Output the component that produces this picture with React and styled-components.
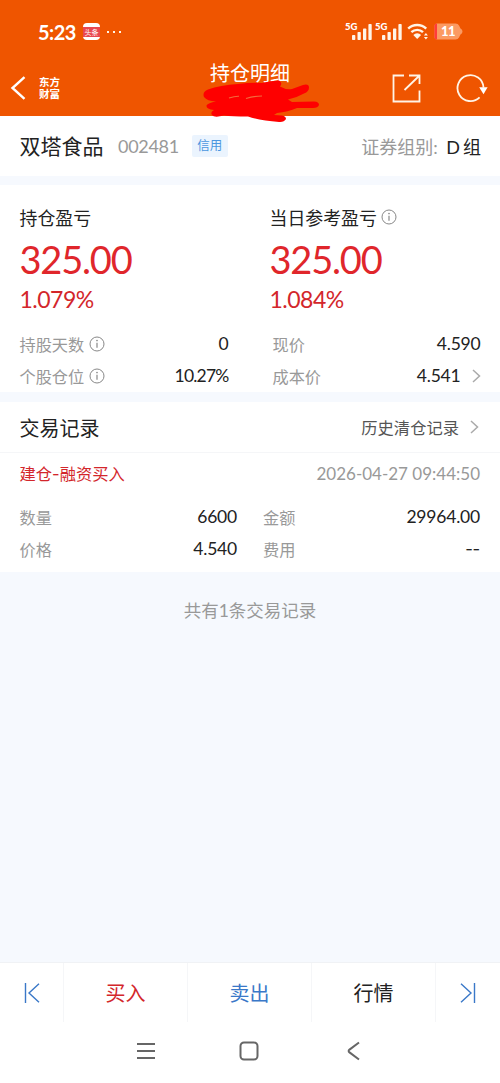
import React from "react";
import styled, { createGlobalStyle } from "styled-components";

const App = () => {
  return (
    <Page>
      <GlobalStyle />
      <Header>
        <StatusBar />
        <TitleBar>
          <BackIcon />
          <Brand>
            东方
            <br />
            财富
          </Brand>
          <Title>
            持仓明细
            <Scribble />
          </Title>
          <ShareIcon />
          <RefreshIcon />
        </TitleBar>
      </Header>

      <StockRow>
        <StockName>双塔食品</StockName>
        <StockCode>002481</StockCode>
        <Tag>信用</Tag>
        <Group>
          证券组别: <b>D</b>
          <i>组</i>
        </Group>
      </StockRow>

      <ProfitCard>
        <ProfitRow>
          <Profit title="持仓盈亏" amount="325.00" percent="1.079%" />
          <Profit title="当日参考盈亏" amount="325.00" percent="1.084%" info />
        </ProfitRow>
        <Details $columns="209px 208px" $gap="44px">
          <Detail label="持股天数" value="0" info />
          <Detail label="现价" value="4.590" />
          <Detail label="个股仓位" value="10.27%" info tight />
          <Detail label="成本价" value="4.541" arrow />
        </Details>
      </ProfitCard>

      <RecordsHeader>
        <h2>交易记录</h2>
        <HistoryLink>
          历史清仓记录
          <Chevron />
        </HistoryLink>
      </RecordsHeader>

      <Record>
        <RecordTop>
          <RecordType>
            建仓<Dash>-</Dash>融资买入
          </RecordType>
          <RecordTime>2026-04-27 09:44:50</RecordTime>
        </RecordTop>
        <Details $columns="217.5px 217px" $gap="26px">
          <Detail label="数量" value="6600" />
          <Detail label="金额" value="29964.00" />
          <Detail label="价格" value="4.540" />
          <Detail label="费用" value={<Dash>--</Dash>} />
        </Details>
      </Record>

      <Summary>共有1条交易记录</Summary>

      <ActionBar>
        <Action $color="#3a78c8">
          <SkipIcon />
        </Action>
        <Action $color="#d3262b">买入</Action>
        <Action $color="#3a78c8">卖出</Action>
        <Action $color="#222">行情</Action>
        <Action $color="#3a78c8">
          <SkipIcon flip />
        </Action>
      </ActionBar>
      <SystemNav />
    </Page>
  );
};

const StatusBar = () => (
  <Status>
    <Clock>5:23</Clock>
    <NewsBadge>
      <span>头条</span>
    </NewsBadge>
    <Dots>
      <span />
      <span />
      <span />
    </Dots>
    <StatusRight>
      <Signal />
      <Signal />
      <WifiSvg width="22" height="17" viewBox="0 0 22 17" fill="none">
        <path
          d="M1.2 5.6a13 13 0 0 1 18 0M4.4 9.2a8.4 8.4 0 0 1 11.6 0"
          stroke="#fff4e6"
          strokeWidth="2.4"
        />
        <path d="M6.3 11.9a5.6 5.6 0 0 1 7.8 0L10.2 16z" fill="#fff4e6" />
        <path
          d="M16.9 12.6l2-2.6 2 2.6zM16.9 14l2 2.6 2-2.6z"
          fill="#fff4e6"
        />
      </WifiSvg>
      <Battery>
        <svg width="29" height="17" viewBox="0 0 29 17">
          <path
            d="M3 .5h18.5q2.5 0 3.5 2l1.5 3q2 1 2 3t-2 3l-1.5 3q-1 2-3.5 2H3q-2.5 0-2.5-2.5V3Q.5.5 3 .5z"
            fill="#fb9a62"
          />
          <path d="M3 .5v16q-2.5 0-2.5-2.5V3Q.5.5 3 .5z" fill="#ff3b3b" />
        </svg>
        <span>11</span>
      </Battery>
    </StatusRight>
  </Status>
);

const Signal = () => (
  <SignalWrap>
    <span>5G</span>
    <svg width="20" height="16" viewBox="0 0 20 16" fill="#fff4e6">
      <rect x="0" y="11" width="3.3" height="5" rx="0.8" />
      <rect x="5.5" y="8" width="3.3" height="8" rx="0.8" />
      <rect x="11" y="4.5" width="3.3" height="11.5" rx="0.8" />
      <rect x="16.4" y="0" width="3.3" height="16" rx="0.8" />
    </svg>
  </SignalWrap>
);

const BackIcon = () => (
  <svg width="16" height="24" viewBox="0 0 16 24" fill="none">
    <path d="M14.5 1.2L2.5 12l12 10.8" stroke="#fff" strokeWidth="2.4" />
  </svg>
);

const ShareIcon = () => (
  <ShareSvg width="29" height="29" viewBox="0 0 29 29" fill="none">
    <path d="M12 1.5H1.5v26h26V16.5M17 1.5h10.5V10M27 2L12.5 16" />
  </ShareSvg>
);

const RefreshIcon = () => (
  <svg width="32" height="30" viewBox="0 0 32 30" fill="none">
    <path
      d="M23.6 24.4A13 13 0 1 1 27.5 14.5"
      stroke="#fff4e6"
      strokeWidth="1.8"
    />
    <path d="M23.2 14.2h8.4L27.5 21.2z" fill="#fff" />
  </svg>
);

const Scribble = () => (
  <ScribbleSvg width="120" height="46" viewBox="0 0 120 46">
    <path
      d="M4 18Q2 13 8 10.5Q20 6 38 5Q52 3 62 4Q72 1.500 79 1.500Q83 3.500 80 7.500Q86 11 92 10L103 6Q109 4.500 109 8.500Q109 12.500 104 14.500Q96 19 88 20.500L92 23L114 22.500Q119 22.500 119 26Q118 29 113 29H97Q88 33 77 34L74 36L82 36.500Q86 37 86 40Q84 43.500 79 43Q60 41.500 48 37.500Q32 37.500 24 36.500Q14 39 12 36Q10 33 14 31Q6 30 6.500 26.500Q8 24 16 22.500Q7 22 4 18z"
      fill="#fe0000"
    />
    <path
      d="M29 19q6-2 10-1.800M46 19.500q8-2.500 16-2.500"
      fill="none"
      stroke="#f36a3c"
      strokeWidth="1.1"
    />
  </ScribbleSvg>
);

const InfoIcon = () => (
  <svg width="16" height="16" viewBox="0 0 16 16" fill="none">
    <circle cx="8" cy="8" r="7" stroke="#888" />
    <path d="M8 6.8v5" stroke="#888" strokeWidth="1.2" />
    <circle cx="8" cy="4.5" r="0.85" fill="#888" />
  </svg>
);

const Chevron = () => (
  <ChevronSvg width="9" height="14" viewBox="0 0 9 14" fill="none">
    <path d="M1 1l6.5 6L1 13" stroke="#aaa" strokeWidth="1.5" />
  </ChevronSvg>
);

const SkipIcon = ({ flip }) => (
  <svg width="16" height="20" viewBox="0 0 16 20" fill="none">
    <path
      d={
        flip
          ? "M1 .8L11 10 1 19.2M14.5 0v20"
          : "M15 .8L5 10l10 9.2M1.5 0v20"
      }
      stroke="currentColor"
      strokeWidth="1.4"
    />
  </svg>
);

const Profit = ({ title, amount, percent, info }) => (
  <ProfitItem>
    <h3>
      {title}
      {info && <InfoIcon />}
    </h3>
    <Amount>{amount}</Amount>
    <Percent>{percent}</Percent>
  </ProfitItem>
);

const Detail = ({ label, value, info, arrow, tight }) => (
  <DetailRow>
    <label>
      {label}
      {info && <InfoIcon />}
    </label>
    <Value $tight={tight}>
      {value}
      {arrow && <Chevron />}
    </Value>
  </DetailRow>
);

const SystemNav = () => (
  <Nav>
    <svg width="18" height="18" viewBox="0 0 18 18" fill="none">
      <path d="M0 2h18M0 9h18M0 16h18" />
    </svg>
    <svg width="20" height="20" viewBox="0 0 20 20" fill="none">
      <rect x="1.5" y="1.5" width="17" height="17" rx="3.5" />
    </svg>
    <svg width="14" height="20" viewBox="0 0 14 20" fill="none">
      <path d="M13 1.5L3.5 8.6q-1.7 1.4 0 2.8L13 18.5" />
    </svg>
  </Nav>
);

const GlobalStyle = createGlobalStyle`
  * {
    box-sizing: border-box;
  }
  body {
    margin: 0;
    background: #f6f9fe;
    font-family: Lato, "Noto Sans CJK SC", sans-serif;
  }
  h2, h3 {
    margin: 0;
    font-weight: 400;
  }
  svg {
    display: block;
    flex: none;
  }
`;

const Page = styled.div`
  width: 500px;
  height: 1083px;
  display: flex;
  flex-direction: column;
  overflow: hidden;
  background: #f6f9fe;
  color: #222;
  white-space: nowrap;
`;

const Header = styled.header`
  height: 116px;
  background: #ef5500;
  color: #fff;
`;

const Status = styled.div`
  height: 60px;
  padding: 3px 37px 0 38px;
  display: flex;
  align-items: center;
`;

const Clock = styled.div`
  width: 45px;
  font-size: 20px;
  font-weight: 700;
  line-height: 24px;
  letter-spacing: -0.5px;
`;

const NewsBadge = styled.div`
  width: 17px;
  height: 17px;
  border-radius: 4px;
  background: #fff;
  display: flex;
  align-items: center;
  span {
    width: 17px;
    height: 10px;
    background: #e9474f;
    font-size: 7px;
    line-height: 10px;
    text-align: center;
  }
`;

const Dots = styled.div`
  display: flex;
  gap: 4px;
  margin-left: 7px;
  span {
    width: 2px;
    height: 2px;
    background: #fff4e6;
  }
`;

const StatusRight = styled.div`
  margin-left: auto;
  display: flex;
  align-items: center;
`;

const SignalWrap = styled.div`
  width: 30px;
  display: flex;
  align-items: flex-start;
  span {
    width: 7px;
    font-size: 9.5px;
    font-weight: 900;
    line-height: 9px;
    margin-top: -2px;
  }
`;

const WifiSvg = styled.svg`
  margin-left: 2px;
`;

const Battery = styled.div`
  position: relative;
  margin-left: 5px;
  span {
    position: absolute;
    left: 7px;
    top: 0;
    font-size: 13px;
    font-weight: 900;
    line-height: 17px;
    letter-spacing: -0.6px;
  }
`;

const TitleBar = styled.div`
  height: 56px;
  padding: 0 12px 0 10px;
  display: flex;
  align-items: center;
`;

const Brand = styled.div`
  width: 24px;
  margin-left: 13px;
  font-family: "Noto Sans CJK SC", sans-serif;
  font-size: 10.5px;
  font-weight: 700;
  line-height: 12px;
`;

const Title = styled.div`
  position: relative;
  width: 80px;
  margin: 0 102px 31px 147px;
  font-size: 20px;
  line-height: 28px;
`;

const ScribbleSvg = styled.svg`
  position: absolute;
  left: -10px;
  top: 20px;
`;

const ShareSvg = styled.svg`
  margin-right: 35px;
  stroke: #fff4e6;
  stroke-width: 1.8;
`;

const StockRow = styled.div`
  height: 60px;
  padding: 0 19px 1px 19.5px;
  display: flex;
  align-items: center;
  background: #fff;
`;

const StockName = styled.div`
  padding-bottom: 1px;
  font-size: 21px;
`;

const StockCode = styled.div`
  margin-left: 14.5px;
  color: #999;
  font-size: 18px;
  letter-spacing: -0.3px;
`;

const Tag = styled.div`
  width: 36px;
  height: 22px;
  margin-left: 13px;
  border-radius: 2px;
  background: #ebf4fe;
  color: #4c97e0;
  font-size: 12.5px;
  line-height: 22px;
  text-align: center;
`;

const Group = styled.div`
  margin-left: auto;
  color: #999;
  font-size: 18px;
  b,
  i {
    margin-left: 4px;
    color: #222;
    font-style: normal;
    font-weight: 400;
  }
  i {
    margin-left: 3px;
  }
`;

const ProfitCard = styled.div`
  height: 207px;
  margin: 9px 0 10px;
  padding: 19px 19.5px 0;
  background: #fff;
`;

const ProfitRow = styled.div`
  height: 124px;
  display: grid;
  grid-template-columns: 250px 1fr;
`;

const ProfitItem = styled.div`
  h3 {
    height: 26px;
    padding-bottom: 1px;
    display: flex;
    align-items: center;
    gap: 4.5px;
    font-size: 17.9px;
  }
`;

const Amount = styled.div`
  color: #e0262b;
  font-size: 38px;
  line-height: 58px;
  letter-spacing: -1.2px;
`;

const Percent = styled.div`
  margin-top: -5px;
  color: #d3262b;
  font-size: 23px;
  line-height: 32px;
  letter-spacing: -0.5px;
`;

const Details = styled.div`
  display: grid;
  grid-template-columns: ${(props) => props.$columns};
  column-gap: ${(props) => props.$gap};
`;

const DetailRow = styled.div`
  height: 32px;
  padding-bottom: 1px;
  display: flex;
  align-items: center;
  justify-content: space-between;
  label {
    display: flex;
    align-items: center;
    gap: 4.5px;
    color: #999;
    font-size: 16.2px;
  }
`;

const Value = styled.span`
  display: flex;
  align-items: center;
  font-size: 17.5px;
  letter-spacing: ${(props) => (props.$tight ? "-0.8px" : "-0.2px")};
`;

const Dash = styled.span`
  font-family: Inter, sans-serif;
  font-size: 16.5px;
`;

const ChevronSvg = styled.svg`
  margin-left: 11px;
`;

const RecordsHeader = styled.div`
  height: 51px;
  padding: 0 21px 0 19.5px;
  display: flex;
  align-items: center;
  justify-content: space-between;
  border-bottom: 1px solid #f5f6f8;
  background: #fff;
  h2 {
    font-size: 20px;
  }
`;

const HistoryLink = styled.div`
  display: flex;
  align-items: center;
  color: #555;
  font-size: 16.3px;
`;

const Record = styled.div`
  height: 119px;
  padding: 0 20px 0 19.5px;
  background: #fff;
`;

const RecordTop = styled.div`
  height: 48px;
  padding-bottom: 8px;
  display: flex;
  align-items: center;
  justify-content: space-between;
`;

const RecordType = styled.div`
  padding-bottom: 1px;
  color: #d3262b;
  font-size: 16.3px;
`;

const RecordTime = styled.div`
  color: #999;
  font-size: 17px;
`;

const Summary = styled.div`
  flex: 1;
  padding-top: 26px;
  color: #999;
  font-size: 17.5px;
  line-height: 26px;
  text-align: center;
`;

const ActionBar = styled.div`
  height: 61px;
  padding-bottom: 1px;
  display: grid;
  grid-template-columns: 63px 124px 124px 124px 65px;
  border-top: 1px solid #f0f2f5;
  background: #fff;
`;

const Action = styled.div`
  display: flex;
  align-items: center;
  justify-content: center;
  color: ${(props) => props.$color};
  font-size: 20px;
  & + & {
    border-left: 1px solid #f5f6f8;
  }
`;

const Nav = styled.nav`
  height: 60px;
  padding: 0 140px 4px 137px;
  display: flex;
  align-items: center;
  justify-content: space-between;
  background: #fff;
  svg {
    stroke: #666;
    stroke-width: 2;
  }
  svg:nth-child(2) {
    margin-right: 3px;
  }
`;

export default App;
